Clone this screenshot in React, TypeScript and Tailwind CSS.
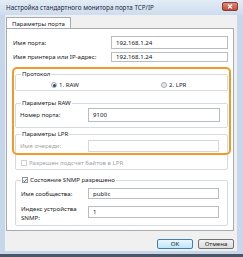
import React from "react";

const font = { fontFamily: "'Noto Sans', 'DejaVu Sans', sans-serif" };

const Field: React.FC<{ value?: string; disabled?: boolean; className?: string }> = ({
	value,
	disabled,
	className,
}) => (
	<div
		className={`border bg-white flex items-center pl-[4px] text-[6.1px] text-[#111] shrink-0 ${
			disabled ? "border-[#d4d6da]" : "border-[#b9bcc2]"
		} ${className ?? ""}`}
	>
		{value}
	</div>
);

const Group: React.FC<{ legend: React.ReactNode; className?: string; children?: React.ReactNode }> = ({
	legend,
	className,
	children,
}) => (
	<fieldset className={`border border-[#d5dbe2] rounded-[2px] ml-[8px] mr-[5px] px-[4px] ${className ?? ""}`}>
		<legend className="px-[1px] ml-[1px] text-[6.1px] leading-[8px] h-[8px] text-[#1a1a1a]">{legend}</legend>
		{children}
	</fieldset>
);

const Radio: React.FC<{ checked?: boolean; label: string }> = ({ checked, label }) => (
	<div className="flex items-center gap-[2px] text-[6.1px] text-[#1a1a1a]">
		<span className="w-[6px] h-[6px] rounded-full border border-[#a9adb4] bg-[#e6e8eb] flex items-center justify-center">
			{checked && <span className="w-[3px] h-[3px] rounded-full bg-[#2c4d7a]" />}
		</span>
		{label}
	</div>
);

const Check: React.FC<{ checked?: boolean; disabled?: boolean; label: string }> = ({
	checked,
	disabled,
	label,
}) => (
	<div className={`flex items-center gap-[2px] text-[6.1px] ${disabled ? "text-[#a3a3a3]" : "text-[#1a1a1a]"}`}>
		<span
			className={`w-[6px] h-[6px] border flex items-center justify-center bg-white ${
				disabled ? "border-[#cdd0d4]" : "border-[#8e9298]"
			}`}
		>
			{checked && (
				<svg width="5" height="5" viewBox="0 0 5 5">
					<path d="M0.6 2.6 L2 4 L4.4 0.8" stroke="#2a3f60" strokeWidth="1" fill="none" />
				</svg>
			)}
		</span>
		{label}
	</div>
);

export default function App() {
	return (
		<div className="w-[243px] h-[257px] bg-[#c6d7ec] flex flex-col overflow-hidden" style={font}>
			{/* title bar */}
			<div className="h-[15px] flex items-center justify-between pl-[6px] pr-[5px] bg-gradient-to-b from-[#e3ecf7] to-[#cddcee]">
				<span className="text-[6.3px] text-[#1e2a3a]">Настройка стандартного монитора порта TCP/IP</span>
				<div className="w-[16px] h-[9px] mb-[2px] rounded-[2px] border border-[#8b3a2e] bg-gradient-to-b from-[#e08a78] to-[#c24a36] flex items-center justify-center">
					<svg width="6" height="5" viewBox="0 0 6 5">
						<path d="M1 0.5 L5 4.5 M5 0.5 L1 4.5" stroke="white" strokeWidth="1.2" />
					</svg>
				</div>
			</div>

			{/* body */}
			<div className="flex-1 ml-[5px] mr-[6px] bg-[#f0f0f0] flex flex-col pl-[1px] pr-[3px] pt-[2px]">
				<div className="flex">
					<div className="h-[12px] px-[5px] flex items-center bg-white border border-b-0 border-[#a7abb0] text-[6.1px] text-[#1a1a1a]">
						Параметры порта
					</div>
				</div>

				<div className="relative h-[203px] -mt-px bg-white border border-[#a7abb0] flex flex-col">
					<div className="flex items-center justify-between pl-[6px] pr-[5px] mt-[7px] h-[13px]">
						<span className="text-[6.1px] text-[#1a1a1a]">Имя порта:</span>
						<Field value="192.168.1.24" className="w-[117px] h-[13px]" />
					</div>
					<div className="flex items-center justify-between pl-[6px] pr-[5px] mt-[3px] h-[10px]">
						<span className="text-[6.1px] text-[#1a1a1a]">Имя принтера или IP-адрес:</span>
						<Field value="192.168.1.24" className="w-[117px] h-[10px]" />
					</div>

					<Group legend="Протокол" className="mt-[8px] pb-[1px]">
						<div className="flex items-center mt-[3px] h-[8px]">
							<div className="w-[110px] pl-[31px]">
								<Radio checked label="1. RAW" />
							</div>
							<div className="pl-[31px]">
								<Radio label="2. LPR" />
							</div>
						</div>
					</Group>

					<Group legend="Параметры RAW" className="mt-[8px] pb-[5px]">
						<div className="flex items-center mt-[1px]">
							<span className="w-[68px] text-[6.1px] text-[#1a1a1a]">Номер порта:</span>
							<Field value="9100" className="w-[132px] h-[14px]" />
						</div>
					</Group>

					<Group legend="Параметры LPR" className="mt-[2px] pb-[2px]">
						<div className="flex items-center mt-[2px]">
							<span className="w-[68px] text-[6.1px] text-[#a3a3a3]">Имя очереди:</span>
							<Field disabled className="w-[131px] h-[12px]" />
						</div>
						<div className="mt-[7px] h-[8px] flex items-center pl-[1px]">
							<Check disabled label="Разрешен подсчет байтов в LPR" />
						</div>
					</Group>

					<Group legend={<Check checked label="Состояние SNMP разрешено" />} className="mt-[6px] pb-[3px]">
						<div className="flex items-center mt-[4px]">
							<span className="w-[68px] text-[6.1px] text-[#1a1a1a] pl-[1px]">Имя сообщества:</span>
							<Field value="public" className="w-[131px] h-[11px]" />
						</div>
						<div className="flex items-start mt-[5px]">
							<span className="w-[68px] text-[6.1px] leading-[9px] text-[#1a1a1a] pl-[1px]">
								Индекс устройства
								<br />
								SNMP:
							</span>
							<Field value="1" className="w-[131px] h-[12px] mt-[2px]" />
						</div>
					</Group>

					{/* orange highlight annotation */}
					<div className="absolute left-[5px] top-[38px] w-[219px] h-[88px] border-2 border-[#f19a27] rounded-[5px] pointer-events-none" />
				</div>

				<div className="flex justify-end gap-[5px] mt-[8px]">
					<button className="w-[36px] h-[10px] rounded-[2px] border border-[#3c7fb1] bg-gradient-to-b from-[#eaf6fd] to-[#bee6fd] text-[6.1px] text-[#1a1a1a] flex items-center justify-center">
						OK
					</button>
					<button className="w-[36px] h-[10px] rounded-[2px] border border-[#707070] bg-gradient-to-b from-[#f2f2f2] to-[#dcdcdc] text-[6.1px] text-[#1a1a1a] flex items-center justify-center">
						Отмена
					</button>
				</div>
			</div>
			<div className="h-[3px] bg-[#c6d7ec]" />
			<div className="h-[3px] bg-[#4b5566]" />
		</div>
	);
}
